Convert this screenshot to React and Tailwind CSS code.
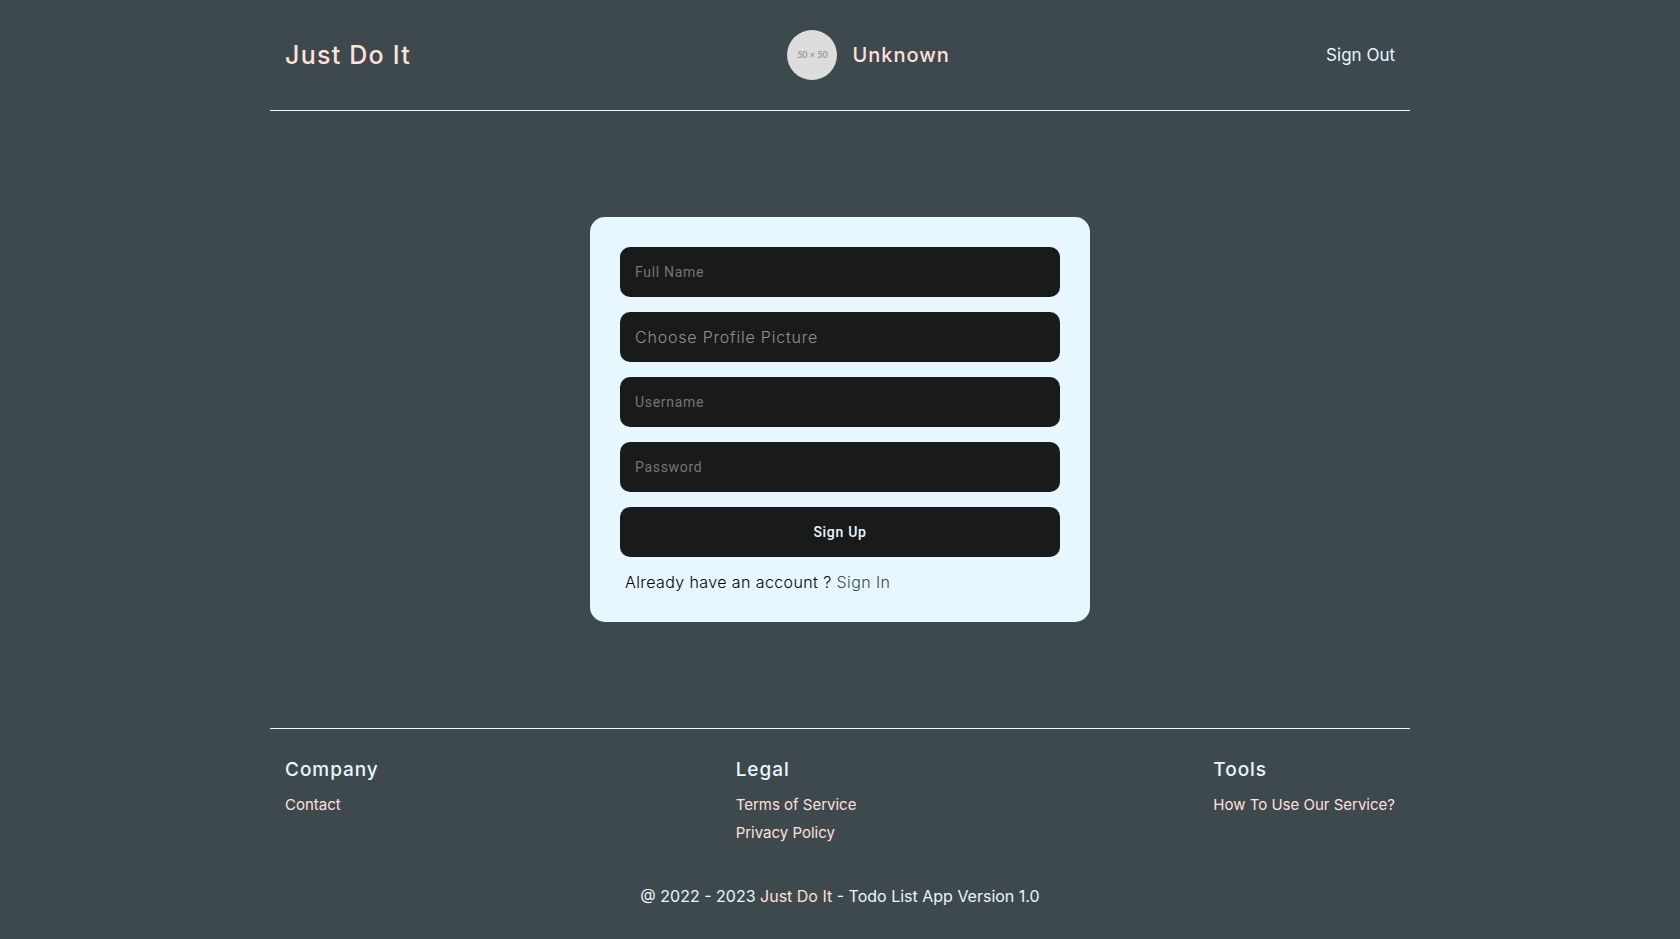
const footerColumns = [
  { title: "Company", links: ["Contact"] },
  { title: "Legal", links: ["Terms of Service", "Privacy Policy"] },
  { title: "Tools", links: ["How To Use Our Service?"] },
];

const fieldClass =
  "h-[50px] w-full rounded-[10px] bg-[#191b1a] px-[15px] font-[Roboto,sans-serif] text-sm tracking-wider text-[#e6f7ff] placeholder:text-[#757575] outline-none";

function Header() {
  return (
    <header className="flex items-center justify-between border-b border-[#e6f7ff] px-[15px] py-[30px]">
      <a href="#home" className="text-[25px] leading-8 font-medium tracking-wider text-[#ffe0db]">
        Just Do It
      </a>
      <div className="flex items-center gap-[15px]">
        <div className="flex size-[50px] items-center justify-center rounded-full bg-[#dddddd] font-[Lato,sans-serif] text-[9px] font-bold text-[#999999]">
          50 × 50
        </div>
        <span className="text-xl font-medium tracking-wider text-[#ffe0db]">Unknown</span>
      </div>
      <button type="button" className="text-[17px] leading-[26px] text-[#e6f7ff]">
        Sign Out
      </button>
    </header>
  );
}

function SignUpForm() {
  return (
    <form
      className="flex w-full max-w-[500px] flex-col gap-[15px] rounded-[15px] bg-[#e6f7ff] p-[30px]"
      onSubmit={(event) => event.preventDefault()}
    >
      <input type="text" aria-label="Full Name" placeholder="Full Name" className={fieldClass} />
      <label className="relative flex h-[50px] w-full cursor-pointer items-center rounded-[10px] bg-[#191b1a] px-[15px] font-light tracking-wider text-[#909090]">
        Choose Profile Picture
        <input type="file" accept="image/*" className="sr-only" />
      </label>
      <input type="text" aria-label="Username" placeholder="Username" className={fieldClass} />
      <input type="password" aria-label="Password" placeholder="Password" className={fieldClass} />
      <button
        type="submit"
        className="h-[50px] w-full rounded-[10px] bg-[#191b1a] font-[Roboto,sans-serif] text-sm font-medium tracking-wider text-[#e6f7ff]"
      >
        Sign Up
      </button>
      <p className="px-[5px] text-base leading-5 font-light tracking-wide text-black">
        Already have an account ?{" "}
        <a href="#sign-in" className="text-[#3e494e]">
          Sign In
        </a>
      </p>
    </form>
  );
}

function Footer() {
  return (
    <footer className="border-t border-[#e6f7ff] px-[15px] py-[30px]">
      <div className="flex justify-between">
        {footerColumns.map((column) => (
          <section key={column.title}>
            <h2 className="text-[19px] leading-[22px] font-medium tracking-wider text-[#e6f7ff]">
              {column.title}
            </h2>
            <ul className="mt-[10px]">
              {column.links.map((link) => (
                <li key={link} className="text-[15px] leading-7 text-[#ffe0db]">
                  <a href="#footer">{link}</a>
                </li>
              ))}
            </ul>
          </section>
        ))}
      </div>
      <p className="mt-9 text-center text-base leading-[26px] text-[#e6f7ff]">
        @ 2022 - 2023 <span className="text-[#ffe0db]">Just Do It</span> - Todo List App Version 1.0
      </p>
    </footer>
  );
}

export default function App() {
  return (
    <div className="min-h-screen bg-[#3e494e] font-[Inter,sans-serif]">
      <div className="mx-auto flex min-h-screen max-w-[1140px] flex-col">
        <Header />
        <main className="flex flex-1 items-center justify-center">
          <SignUpForm />
        </main>
        <Footer />
      </div>
    </div>
  );
}
